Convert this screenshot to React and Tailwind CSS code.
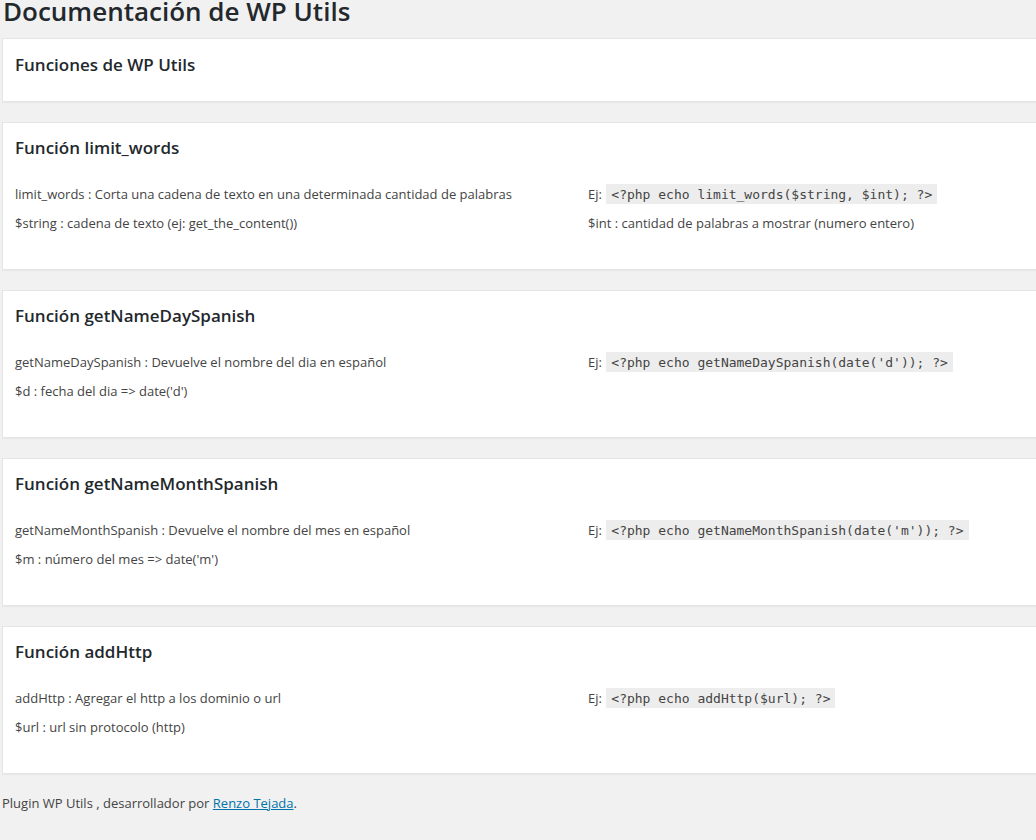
import React from "react";

const sections = [
  {
    title: "Función limit_words",
    rows: [
      ["limit_words : Corta una cadena de texto en una determinada cantidad de palabras", { code: "<?php echo limit_words($string, $int); ?>" }],
      ["$string : cadena de texto (ej: get_the_content())", "$int : cantidad de palabras a mostrar (numero entero)"],
    ],
  },
  {
    title: "Función getNameDaySpanish",
    rows: [
      ["getNameDaySpanish : Devuelve el nombre del dia en español", { code: "<?php echo getNameDaySpanish(date('d')); ?>" }],
      ["$d : fecha del dia => date('d')", ""],
    ],
  },
  {
    title: "Función getNameMonthSpanish",
    rows: [
      ["getNameMonthSpanish : Devuelve el nombre del mes en español", { code: "<?php echo getNameMonthSpanish(date('m')); ?>" }],
      ["$m : número del mes => date('m')", ""],
    ],
  },
  {
    title: "Función addHttp",
    rows: [
      ["addHttp : Agregar el http a los dominio o url", { code: "<?php echo addHttp($url); ?>" }],
      ["$url : url sin protocolo (http)", ""],
    ],
  },
];

function Cell({ value }) {
  if (value && typeof value === "object") {
    return (
      <span>
        Ej:{" "}
        <code className="mx-[1px] bg-[rgba(0,0,0,0.07)] px-[5px] pt-[3px] pb-[2px] text-[13px] font-['DejaVu_Sans_Mono',monospace]">
          {value.code}
        </code>
      </span>
    );
  }
  return <span>{value}</span>;
}

export default function App() {
  return (
    <div className="min-h-screen overflow-hidden bg-[#f1f1f1] font-['Open_Sans',sans-serif] text-[13px] text-[#444]">
      <div className="pl-[2px]">
        <h1 className="mt-[-6px] mb-[10px] pl-[1px] text-[26px] leading-[34px] font-semibold text-[#23282d]">
          Documentación de WP Utils
        </h1>
        <div className="mr-[-20px] flex flex-col gap-[20px]">
          <div className="h-[64px] border border-[#e5e5e5] bg-white px-[12px] pt-[15px] shadow-[0_1px_1px_rgba(0,0,0,0.04)]">
            <h3 className="text-[17px] leading-[22px] font-semibold text-[#23282d]">Funciones de WP Utils</h3>
          </div>
          {sections.map((s) => (
            <div
              key={s.title}
              className="h-[148px] border border-[#e5e5e5] bg-white px-[12px] pt-[14px] shadow-[0_1px_1px_rgba(0,0,0,0.04)]"
            >
              <h3 className="text-[17px] leading-[22px] font-semibold text-[#23282d]">{s.title}</h3>
              <div className="mt-[21px] flex flex-col">
                {s.rows.map((r, i) => (
                  <div key={i} className="grid h-[29px] grid-cols-[573px_1fr] items-center">
                    <Cell value={r[0]} />
                    <Cell value={r[1]} />
                  </div>
                ))}
              </div>
            </div>
          ))}
        </div>
        <p className="mt-[19px] text-[13px] leading-[20px] text-[#444]">
          Plugin WP Utils , desarrollador por{" "}
          <a href="#" className="text-[#0073aa] underline">
            Renzo Tejada
          </a>
          .
        </p>
      </div>
    </div>
  );
}
